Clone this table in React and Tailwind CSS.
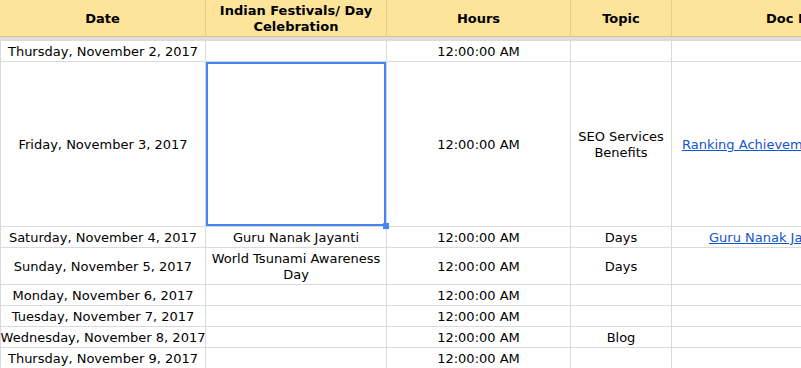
import React from 'react';

const COLS = 'grid grid-cols-[206px_181px_184px_101px_1fr]';

const rows = [
  { h: 'h-[20px]', date: 'Thursday, November 2, 2017', hours: '12:00:00 AM' },
  {
    h: 'h-[164px]',
    date: 'Friday, November 3, 2017',
    hours: '12:00:00 AM',
    topic: 'SEO Services Benefits',
    doc: 'Ranking Achievements',
    docPad: 'pl-[10px]',
    selected: true,
  },
  {
    h: 'h-[20px]',
    date: 'Saturday, November 4, 2017',
    fest: 'Guru Nanak Jayanti',
    hours: '12:00:00 AM',
    topic: 'Days',
    doc: 'Guru Nanak Jayanti',
    docPad: 'pl-[37px]',
  },
  {
    h: 'h-[36px]',
    date: 'Sunday, November 5, 2017',
    fest: 'World Tsunami Awareness Day',
    hours: '12:00:00 AM',
    topic: 'Days',
  },
  { h: 'h-[20px]', date: 'Monday, November 6, 2017', hours: '12:00:00 AM' },
  { h: 'h-[20px]', date: 'Tuesday, November 7, 2017', hours: '12:00:00 AM' },
  { h: 'h-[20px]', date: 'Wednesday, November 8, 2017', hours: '12:00:00 AM', topic: 'Blog' },
  { h: 'h-[20px]', date: 'Thursday, November 9, 2017', hours: '12:00:00 AM' },
];

function Cell({ children, className = '' }) {
  return (
    <div
      className={`flex items-center justify-center text-center pt-px border-r border-[#dadada] leading-[16px] ${className}`}
    >
      {children}
    </div>
  );
}

export default function App() {
  return (
    <div className="w-[801px] h-[368px] overflow-hidden bg-white text-[13px] text-black font-['DejaVu_Sans',Verdana,sans-serif]">
      {/* header */}
      <div className={`${COLS} h-[37px] bg-[#fde49b] border-b border-[#e3c77e] font-bold`}>
        <div className="flex items-center justify-center pt-[2px] border-r border-[#e8cd85]">Date</div>
        <div className="flex items-center justify-center text-center leading-[16px] pt-[2px] border-r border-[#e8cd85] px-1">
          Indian Festivals/ Day Celebration
        </div>
        <div className="flex items-center justify-center pt-[2px] border-r border-[#e8cd85]">Hours</div>
        <div className="flex items-center justify-center pt-[2px] border-r border-[#e8cd85]">Topic</div>
        <div className="flex items-center whitespace-nowrap overflow-hidden pt-[2px] pl-[94px]">Doc Link</div>
      </div>
      <div className="h-[4px] bg-[#dadce0]" />

      {rows.map((r, i) => (
        <div key={i} className={`${COLS} border-b border-[#dadada]`}>
          <Cell className={`${r.h} border-l whitespace-nowrap overflow-hidden`}>{r.date}</Cell>
          <Cell className={`${r.h} relative ${r.selected ? 'z-10' : ''}`}>
            <span className="px-1">{r.fest}</span>
            {r.selected && (
              <div className="absolute inset-0 border-2 border-[#4285f4]">
                <div className="absolute -right-[5px] -bottom-[5px] w-[6px] h-[6px] bg-[#4285f4]" />
              </div>
            )}
          </Cell>
          <Cell className={r.h}>{r.hours}</Cell>
          <Cell className={`${r.h} px-1`}>{r.topic}</Cell>
          <div className={`${r.h} flex items-center pt-px whitespace-nowrap overflow-hidden ${r.docPad || ''}`}>
            {r.doc && <a className="text-[#1155cc] underline">{r.doc}</a>}
          </div>
        </div>
      ))}
    </div>
  );
}
